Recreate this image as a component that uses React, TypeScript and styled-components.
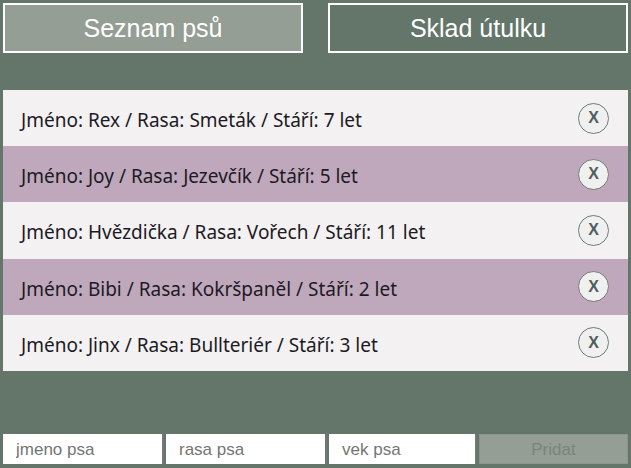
import React from "react";
import styled, { createGlobalStyle } from "styled-components";

const GlobalStyle = createGlobalStyle`
  html, body {
    margin: 0;
    padding: 0;
    background: #64766a;
  }
  * { box-sizing: border-box; }
`;

const Page = styled.div`
  height: 468px;
  padding: 3px 3px 4px;
  display: flex;
  flex-direction: column;
  font-family: "Liberation Sans", Arial, sans-serif;
`;

const Nav = styled.nav`
  display: flex;
  justify-content: space-between;
`;

const NavButton = styled.button<{ $active?: boolean }>`
  width: 48%;
  height: 50px;
  border: 2px solid #ffffff;
  background: ${(p) => (p.$active ? "#949e94" : "#64766a")};
  color: #ffffff;
  font-family: "Liberation Sans", Arial, sans-serif;
  font-size: 25px;
  padding: 0;
  cursor: pointer;
`;

const List = styled.ul`
  list-style: none;
  margin: 37px 0 0;
  padding: 0;
`;

const Row = styled.li<{ $alt?: boolean }>`
  height: 56.2px;
  display: flex;
  align-items: center;
  justify-content: space-between;
  padding: 0 19px 0 18px;
  background: ${(p) => (p.$alt ? "#c0a8bc" : "#f3f1f2")};
  color: #1c1a24;
  font-family: "Noto Sans", "Open Sans", sans-serif;
  font-size: 19px;
`;

const RowText = styled.span`
  padding-top: 4px;
`;

const RemoveButton = styled.button`
  width: 31px;
  height: 31px;
  border-radius: 50%;
  border: 1px solid #6f7f73;
  background: #f0f0f0;
  color: #4e5e5e;
  font-family: "Liberation Sans", Arial, sans-serif;
  font-weight: bold;
  font-size: 16px;
  padding: 0;
  display: flex;
  align-items: center;
  justify-content: center;
`;

const Form = styled.form`
  margin-top: auto;
  display: grid;
  grid-template-columns: 161px 161px 148px 1fr;
  column-gap: 2px;
  height: 30px;
`;

const Input = styled.input`
  border: none;
  border-right: 2px solid #767676;
  background: #ffffff;
  padding: 2px 0 0 13px;
  font-family: "Liberation Sans", Arial, sans-serif;
  font-size: 17px;
  outline: none;
  &::placeholder {
    color: #757575;
  }
`;

const SubmitButton = styled.button`
  border: 1px solid #8b958b;
  background: #949e94;
  color: #7a847a;
  font-family: "Liberation Sans", Arial, sans-serif;
  font-size: 17px;
  padding: 2px 0 0;
`;

const dogs = [
  { name: "Rex", race: "Smeták", age: 7 },
  { name: "Joy", race: "Jezevčík", age: 5 },
  { name: "Hvězdička", race: "Vořech", age: 11 },
  { name: "Bibi", race: "Kokršpaněl", age: 2 },
  { name: "Jinx", race: "Bullteriér", age: 3 },
];

export default function App() {
  return (
    <>
      <GlobalStyle />
      <Page>
        <Nav>
          <NavButton $active>Seznam psů</NavButton>
          <NavButton>Sklad útulku</NavButton>
        </Nav>
        <List>
          {dogs.map((d, i) => (
            <Row key={d.name} $alt={i % 2 === 1}>
              <RowText>
                Jméno: {d.name} / Rasa: {d.race} / Stáří: {d.age} let
              </RowText>
              <RemoveButton>X</RemoveButton>
            </Row>
          ))}
        </List>
        <Form onSubmit={(e) => e.preventDefault()}>
          <Input placeholder="jmeno psa" />
          <Input placeholder="rasa psa" />
          <Input placeholder="vek psa" />
          <SubmitButton disabled>Pridat</SubmitButton>
        </Form>
      </Page>
    </>
  );
}
